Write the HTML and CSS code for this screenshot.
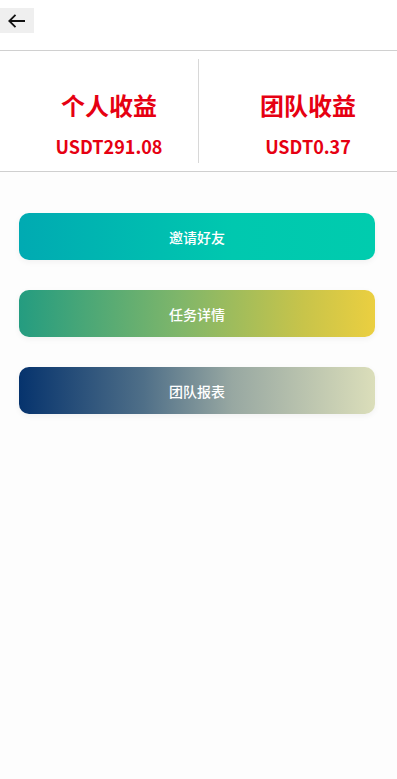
FILE: index.html
```html
<!DOCTYPE html>
<html lang="zh">
<head>
<meta charset="utf-8">
<link rel="stylesheet" href="styles.css">
</head>
<body>
<div class="page">
  <header class="topbar">
    <button class="back" aria-label="返回">
      <svg width="20" height="16" viewBox="0 0 20 16"><path d="M18 8H2.5M8.5 1.8L2.3 8l6.2 6.2" fill="none" stroke="#111" stroke-width="1.8"/></svg>
    </button>
  </header>
  <section class="stats">
    <div class="stat">
      <div class="stat-title">个人收益</div>
      <div class="stat-value">USDT291.08</div>
    </div>
    <div class="divider"></div>
    <div class="stat">
      <div class="stat-title">团队收益</div>
      <div class="stat-value">USDT0.37</div>
    </div>
  </section>
  <nav class="actions">
    <a class="action invite">邀请好友</a>
    <a class="action task">任务详情</a>
    <a class="action report">团队报表</a>
  </nav>
</div>
</body>
</html>
```
FILE: styles.css
```css
html, body {
  margin: 0;
  padding: 0;
  background: #fdfdfd;
  font-family: "Noto Sans CJK SC", "Noto Sans", sans-serif;
}
.page {
  min-height: 779px;
  width: 397px;
}
.topbar {
  height: 51px;
  padding-top: 8px;
  box-sizing: border-box;
  background: #fff;
  border-bottom: 1px solid #d0d0d0;
}
.back {
  display: flex;
  align-items: center;
  justify-content: center;
  width: 34px;
  height: 25px;
  padding: 0;
  border: none;
  background: #efefef;
}
.stats {
  display: flex;
  height: 121px;
  background: #fff;
  border-bottom: 1px solid #cfcfcf;
  padding: 8px 0;
  box-sizing: border-box;
}
.stat {
  flex: 1;
  display: flex;
  flex-direction: column;
  align-items: center;
  padding-top: 31px;
  padding-left: 20px;
  color: #e60012;
  font-weight: 700;
}
.stat-title {
  font-size: 24px;
  line-height: 30px;
}
.stat-value {
  font-size: 18px;
  line-height: 22px;
  margin-top: 15px;
}
.divider {
  width: 1px;
  background: #d8d8d8;
}
.actions {
  display: flex;
  flex-direction: column;
  gap: 30px;
  padding: 41px 22px 0 19px;
}
.action {
  display: flex;
  align-items: center;
  justify-content: center;
  height: 47px;
  border-radius: 10px;
  color: #fff;
  font-size: 14px;
  font-weight: 500;
  box-shadow: 0 2px 6px rgba(0,0,0,0.05);
}
.invite { background: linear-gradient(90deg, #00aab2, #00c8af 60%, #00ccae); }
.task { background: linear-gradient(90deg, #249c80, #7fb66a 45%, #c8c44a 80%, #ebcf40); }
.report { background: linear-gradient(90deg, #06336d, #4f6f88 35%, #98a8a2 60%, #dbdeba); }
```
